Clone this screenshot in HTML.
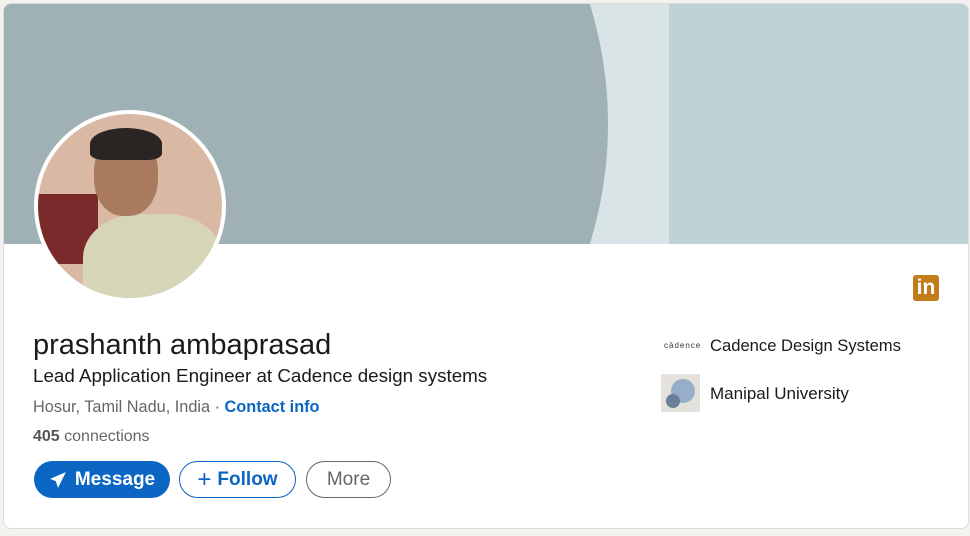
<!DOCTYPE html>
<html style="overflow:hidden"><head><style>
html,body{margin:0;background:#f3f2ef;width:970px;height:536px;overflow:hidden;font-family:"Liberation Sans",sans-serif}
.card{position:absolute;left:3px;top:3px;width:966px;height:526px;box-sizing:border-box;background:#fff;border:1px solid #dcdcdc;border-radius:8px;overflow:hidden}
.banner{position:absolute;left:0;top:0;width:965px;height:240px;background:#bed2d6;overflow:hidden}
.t{position:absolute;white-space:nowrap}
.btn{position:absolute;top:457px;height:37px;border-radius:19px;box-sizing:border-box;font-size:19px;font-weight:bold;display:flex;align-items:center;justify-content:center}
</style></head><body>
<div class="card">
 <div class="banner">
  <div style="position:absolute;left:0;top:0;width:665px;height:241px;background:#d9e4e6"></div>
  <div style="position:absolute;left:-400px;top:-330px;width:1004px;height:900px;border-radius:50%;background:#9fb1b5"></div>
 </div>
 <div style="position:absolute;left:30px;top:106px;width:192px;height:192px;border-radius:50%;background:#fff"></div>
 <div style="position:absolute;left:34px;top:110px;width:184px;height:184px;border-radius:50%;overflow:hidden;background:#d9b9a3">
  <div style="position:absolute;left:0;top:80px;width:60px;height:70px;background:#7a2a2a"></div>
  <div style="position:absolute;left:45px;top:100px;width:140px;height:110px;border-radius:40% 40% 0 0;background:#d6d5b8"></div>
  <div style="position:absolute;left:56px;top:20px;width:64px;height:82px;border-radius:45%;background:#a97a5e"></div>
  <div style="position:absolute;left:52px;top:14px;width:72px;height:32px;border-radius:50% 50% 20% 20%;background:#2a2522"></div>
 </div>
 <div style="position:absolute;left:909px;top:271px;width:26px;height:26px;border-radius:3px;background:#c27c1a;color:#fff;font-weight:bold;font-size:21px;line-height:26px;text-align:center">in</div>
 <div class="t" style="left:29px;top:325px;font-size:29px;color:#1a1a1a">prashanth ambaprasad</div>
 <div class="t" style="left:29px;top:361px;font-size:18.8px;color:#1a1a1a">Lead Application Engineer at Cadence design systems</div>
 <div class="t" style="left:29px;top:394px;font-size:16.3px;color:#666">Hosur, Tamil Nadu, India · <span style="color:#0a66c2;font-weight:bold">Contact info</span></div>
 <div class="t" style="left:29px;top:424px;font-size:16px;color:#666"><b style="color:#555">405</b> connections</div>
 <div class="btn" style="left:30px;width:136px;background:#0a66c2;color:#fff"><svg width="18" height="18" viewBox="0 0 16 16" style="margin-right:8px"><path d="M15 1L1 7l5 2 2 6z" fill="#fff"/></svg>Message</div>
 <div class="btn" style="left:175px;width:117px;border:1.5px solid #0a66c2;color:#0a66c2"><span style="font-size:24px;font-weight:normal;margin-right:6px">+</span>Follow</div>
 <div class="btn" style="left:302px;width:85px;border:1.5px solid #666;color:#666;font-weight:normal">More</div>
 <div class="t" style="left:660px;top:337px;font-size:8px;color:#333;letter-spacing:1px">cādence</div>
 <div class="t" style="left:706px;top:332px;font-size:16.6px;color:#1a1a1a">Cadence Design Systems</div>
 <div style="position:absolute;left:657px;top:370px;width:39px;height:38px;background:#e5e1dc;overflow:hidden">
  <div style="position:absolute;left:10px;top:5px;width:24px;height:24px;border-radius:50%;background:#97aec8"></div>
  <div style="position:absolute;left:5px;top:20px;width:14px;height:14px;border-radius:50%;background:#6a7f99"></div>
 </div>
 <div class="t" style="left:706px;top:380px;font-size:17px;color:#1a1a1a">Manipal University</div>
</div>
</body></html>
